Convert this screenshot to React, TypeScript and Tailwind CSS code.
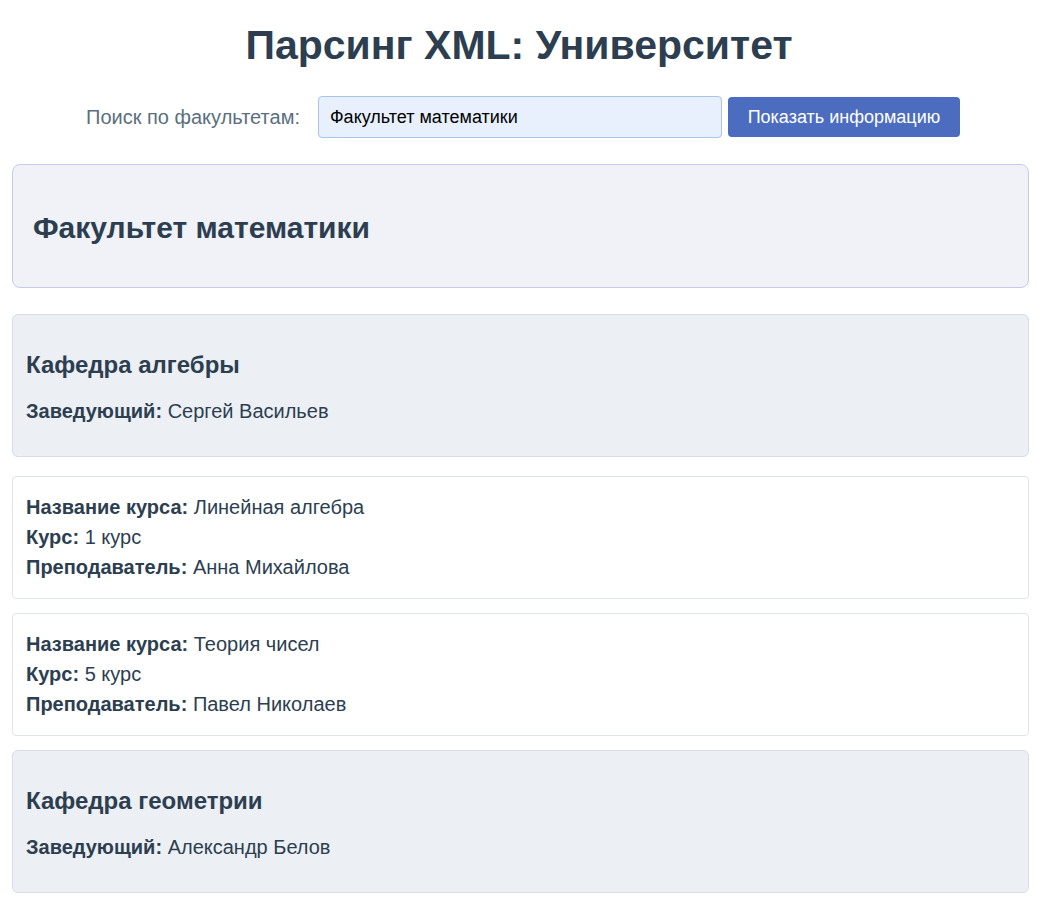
import React from "react";

const courses1 = [
  { name: "Линейная алгебра", year: "1 курс", teacher: "Анна Михайлова" },
  { name: "Теория чисел", year: "5 курс", teacher: "Павел Николаев" },
];

function Course({ c }: { c: { name: string; year: string; teacher: string } }) {
  return (
    <div className="bg-white border border-[#e1e5ea] rounded-[4px] px-[13px] pt-[15px] pb-[16px] text-[20px] leading-[30px] text-[#2c3e50]">
      <div><b>Название курса:</b> {c.name}</div>
      <div><b>Курс:</b> {c.year}</div>
      <div><b>Преподаватель:</b> {c.teacher}</div>
    </div>
  );
}

function Dept({ name, head }: { name: string; head: string }) {
  return (
    <div className="bg-[#ecf0f5] border border-[#d6dde6] rounded-[6px] px-[13px] pt-[37px] pb-[34px] text-[#2c3e50]">
      <div className="text-[24px] font-bold leading-[26px]">{name}</div>
      <div className="mt-[22px] text-[20px] leading-[22px]"><b>Заведующий:</b> {head}</div>
    </div>
  );
}

export default function App() {
  return (
    <div className="min-h-screen bg-white font-['Liberation_Sans',Arial,sans-serif] text-[#2c3e50]">
      <h1 className="text-center text-[41px] font-bold leading-[48px] pt-[21px] text-[#2c3e50]">Парсинг XML: Университет</h1>
      <div className="flex items-center justify-center mt-[27px] pl-[8px]">
        <label className="text-[20px] text-[#5a6f80] mr-[18px]">Поиск по факультетам:</label>
        <input
          className="w-[404px] h-[42px] bg-[#e8f0fe] border border-[#a9c3ea] rounded-[4px] px-[11px] text-[18px] text-black outline-none"
          defaultValue="Факультет математики"
        />
        <button className="ml-[6px] w-[232px] h-[40px] bg-[#4b6cbf] text-white rounded-[4px] text-[18px]">Показать информацию</button>
      </div>
      <div className="mx-[12px] w-[1017px] mt-[26px] flex flex-col">
        <div className="bg-[#f0f2f7] border border-[#c6cbe8] rounded-[8px] px-[20px] h-[124px] flex items-center">
          <h2 className="text-[30px] font-bold leading-[34px] mt-[4px] text-[#2c3e50]">Факультет математики</h2>
        </div>
        <div className="mt-[26px] flex flex-col gap-[14px]">
          <Dept name="Кафедра алгебры" head="Сергей Васильев" />
          <div className="mt-[5px] flex flex-col gap-[14px]">
            {courses1.map((c) => (
              <Course key={c.name} c={c} />
            ))}
          </div>
          <Dept name="Кафедра геометрии" head="Александр Белов" />
        </div>
      </div>
    </div>
  );
}
